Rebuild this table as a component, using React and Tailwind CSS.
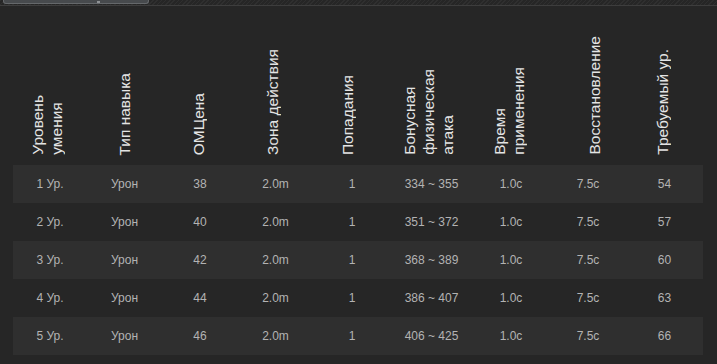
import React from 'react';

const columns = [
  { w: 74, shift: 'mr-[6px]', head: ['Уровень', 'умения'] },
  { w: 75, shift: '', head: ['Тип навыка'] },
  { w: 76, shift: 'mr-[4px]', head: ['ОМЦена'] },
  { w: 75, shift: 'mr-[6px]', head: ['Зона действия'] },
  { w: 78, shift: 'mr-[10px]', head: ['Попадания'] },
  { w: 81, shift: 'mr-[6px]', head: ['Бонусная', 'физическая', 'атака'] },
  { w: 78, shift: 'mr-[4px]', head: ['Время', 'применения'] },
  { w: 76, shift: 'ml-[12px]', head: ['Восстановление'] },
  { w: 77, shift: 'mr-[4px]', head: ['Требуемый ур.'] },
];

const rows = [
  ['1 Ур.', 'Урон', '38', '2.0m', '1', '334 ~ 355', '1.0c', '7.5c', '54'],
  ['2 Ур.', 'Урон', '40', '2.0m', '1', '351 ~ 372', '1.0c', '7.5c', '57'],
  ['3 Ур.', 'Урон', '42', '2.0m', '1', '368 ~ 389', '1.0c', '7.5c', '60'],
  ['4 Ур.', 'Урон', '44', '2.0m', '1', '386 ~ 407', '1.0c', '7.5c', '63'],
  ['5 Ур.', 'Урон', '46', '2.0m', '1', '406 ~ 425', '1.0c', '7.5c', '66'],
];

export default function App() {
  return (
    <div className="w-[717px] h-[364px] overflow-hidden bg-[#262626] font-['Liberation_Sans',Arial,sans-serif]">
      {/* top strip */}
      <div className="relative h-[6px] bg-[#2b2b2b] bg-[repeating-linear-gradient(135deg,#2f2f2f_0px,#2f2f2f_1px,#262626_1px,#262626_3px)] border-b border-[#3d3d3d]">
        <div className="absolute left-[3px] top-0 w-[146px] h-[4px] bg-[#474a4d] border-x border-b border-[#65686b] rounded-b-[3px]">
          <div className="absolute left-[93px] top-[1px] w-[3px] h-[2px] bg-[#8e9194]" />
        </div>
      </div>

      <table className="ml-[13px] table-fixed border-collapse w-[690px]">
        <colgroup>
          {columns.map((c, i) => (
            <col key={i} style={{ width: c.w }} />
          ))}
        </colgroup>
        <thead>
          <tr className="h-[159px]">
            {columns.map((c, i) => (
              <th key={i} className="align-bottom p-0 pb-[10px] font-normal">
                <div className="flex justify-center">
                  <div className={`${c.shift} [writing-mode:vertical-rl] rotate-180 text-left text-[15.5px] leading-[19px] text-[#e4e4e4] whitespace-nowrap`}>
                    {c.head.map((line, j) => (
                      <React.Fragment key={j}>
                        {j > 0 && <br />}
                        {line}
                      </React.Fragment>
                    ))}
                  </div>
                </div>
              </th>
            ))}
          </tr>
        </thead>
        <tbody>
          {rows.map((r, i) => (
            <tr key={i} className={i % 2 === 0 ? 'h-[38px] bg-[#2f2f2f]' : 'h-[38px] bg-[#262626]'}>
              {r.map((cell, j) => (
                <td key={j} className="p-0 text-center text-[12px] text-[#b3b3b3]">
                  {cell}
                </td>
              ))}
            </tr>
          ))}
        </tbody>
      </table>
    </div>
  );
}
